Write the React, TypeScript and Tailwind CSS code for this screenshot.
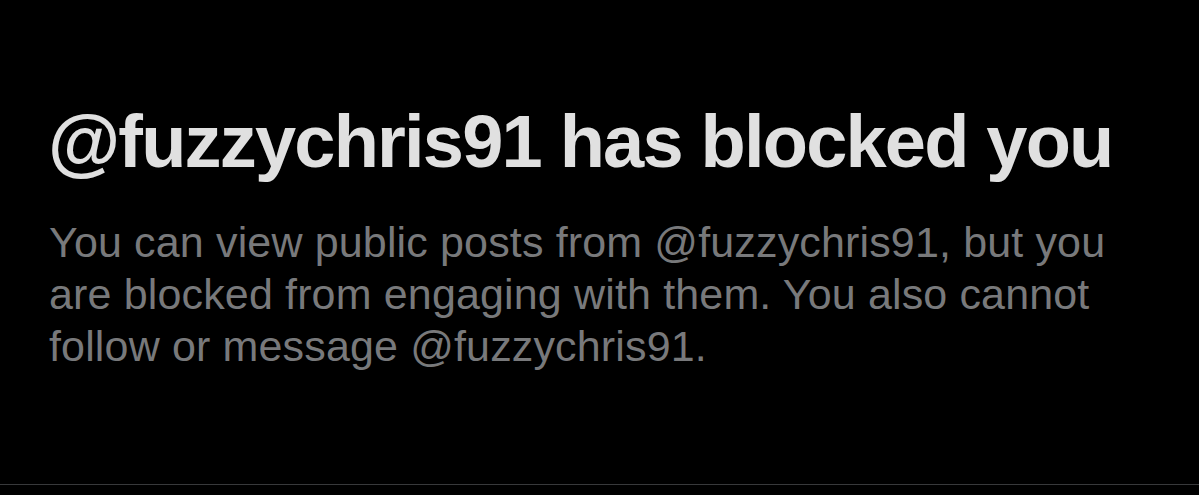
export default function App() {
  return (
    <div className="w-[1199px] h-[495px] bg-black overflow-hidden" style={{ fontFamily: '"Liberation Sans", Arial, sans-serif' }}>
      <div className="h-[485px] border-b border-[#38393b] pl-[48px] pt-[102px]">
        <h1 className="text-[74px] leading-[80px] font-bold tracking-[-1.8px] text-[#e0e0e0] whitespace-nowrap">
          @fuzzychris91 has blocked you
        </h1>
        <p className="mt-[34px] ml-[1px] w-[1100px] text-[43px] leading-[52px] tracking-[0.15px] text-[#78797b]">
          You can view public posts from @fuzzychris91, but you are blocked from engaging with them. You also cannot follow or message @fuzzychris91.
        </p>
      </div>
    </div>
  );
}
